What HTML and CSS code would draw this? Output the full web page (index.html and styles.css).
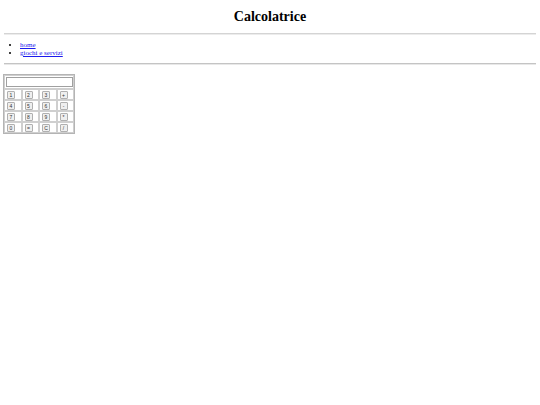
FILE: index.html
```html
<!DOCTYPE html>
<html>
<head>
<meta charset="utf-8">
<title>Calcolatrice</title>
<link rel="stylesheet" href="styles.css">
</head>
<body class="page">
<h1 class="title">Calcolatrice</h1>
<hr class="rule rule-top">
<ul class="nav">
<li class="nav-item"><a class="link" href="#">home</a></li>
<li class="nav-item"><a class="link" href="#">giochi e servizi</a></li>
</ul>
<hr class="rule rule-bottom">
<form class="calc-form">
<table class="calc">
<tr><td class="cell cell-display" colspan="4"><input class="display" type="text" name="display"></td></tr>
<tr><td class="cell"><input class="key" type="button" value="1"></td><td class="cell"><input class="key" type="button" value="2"></td><td class="cell"><input class="key" type="button" value="3"></td><td class="cell"><input class="key" type="button" value="+"></td></tr>
<tr><td class="cell"><input class="key" type="button" value="4"></td><td class="cell"><input class="key" type="button" value="5"></td><td class="cell"><input class="key" type="button" value="6"></td><td class="cell"><input class="key" type="button" value="-"></td></tr>
<tr><td class="cell"><input class="key" type="button" value="7"></td><td class="cell"><input class="key" type="button" value="8"></td><td class="cell"><input class="key" type="button" value="9"></td><td class="cell"><input class="key" type="button" value="*"></td></tr>
<tr><td class="cell"><input class="key" type="button" value="0"></td><td class="cell"><input class="key" type="button" value="="></td><td class="cell"><input class="key" type="button" value="C"></td><td class="cell"><input class="key" type="button" value="/"></td></tr>
</table>
</form>
</body>
</html>
```
FILE: styles.css
```css
html, body {
  margin: 0;
  padding: 0;
  background: #ffffff;
}
.page {
  padding: 0 4px;
  font-family: "Liberation Serif", "Times New Roman", serif;
  color: #000000;
}
.title {
  margin: 8px 0 0;
  font-size: 14px;
  line-height: 17px;
  font-weight: bold;
  text-align: center;
}
.rule {
  margin: 0;
  height: 0;
  border: none;
}
.rule-top {
  margin-top: 8px;
  border-top: 1px solid #d4d4d4;
  border-bottom: 1px solid #ececec;
}
.rule-bottom {
  margin-top: 6px;
  border-top: 1px solid #c4c4c4;
  border-bottom: 1px solid #e8e8e8;
}
.nav {
  margin: 6px 0 0;
  padding-left: 16px;
  font-size: 7px;
  line-height: 8px;
}
.nav-item {
  list-style: disc;
}
.link {
  color: #1a1aee;
}
.calc-form {
  margin: 9px 0 0 -1px;
}
.calc {
  border: 1px solid #b4b4b4;
  border-collapse: separate;
  border-spacing: 0;
}
.cell {
  box-sizing: border-box;
  width: 17px;
  height: 11px;
  padding: 0 0 0 2px;
  border: 1px solid #cfcfcf;
  vertical-align: middle;
}
.cell-display {
  height: 14px;
  padding: 0 0 0 1px;
}
.display {
  display: block;
  box-sizing: border-box;
  width: 67px;
  height: 10px;
  margin: 0;
  padding: 0;
  border: 1px solid #a0a0a0;
  background: #ffffff;
}
.key {
  display: block;
  box-sizing: border-box;
  width: 8px;
  height: 8px;
  margin: 0;
  padding: 0;
  border: 1px solid #b0b0b0;
  border-radius: 1px;
  background: #efefef;
  color: #333333;
  font-family: "Liberation Sans", Arial, sans-serif;
  font-size: 5px;
  line-height: 6px;
  text-align: center;
}
```
